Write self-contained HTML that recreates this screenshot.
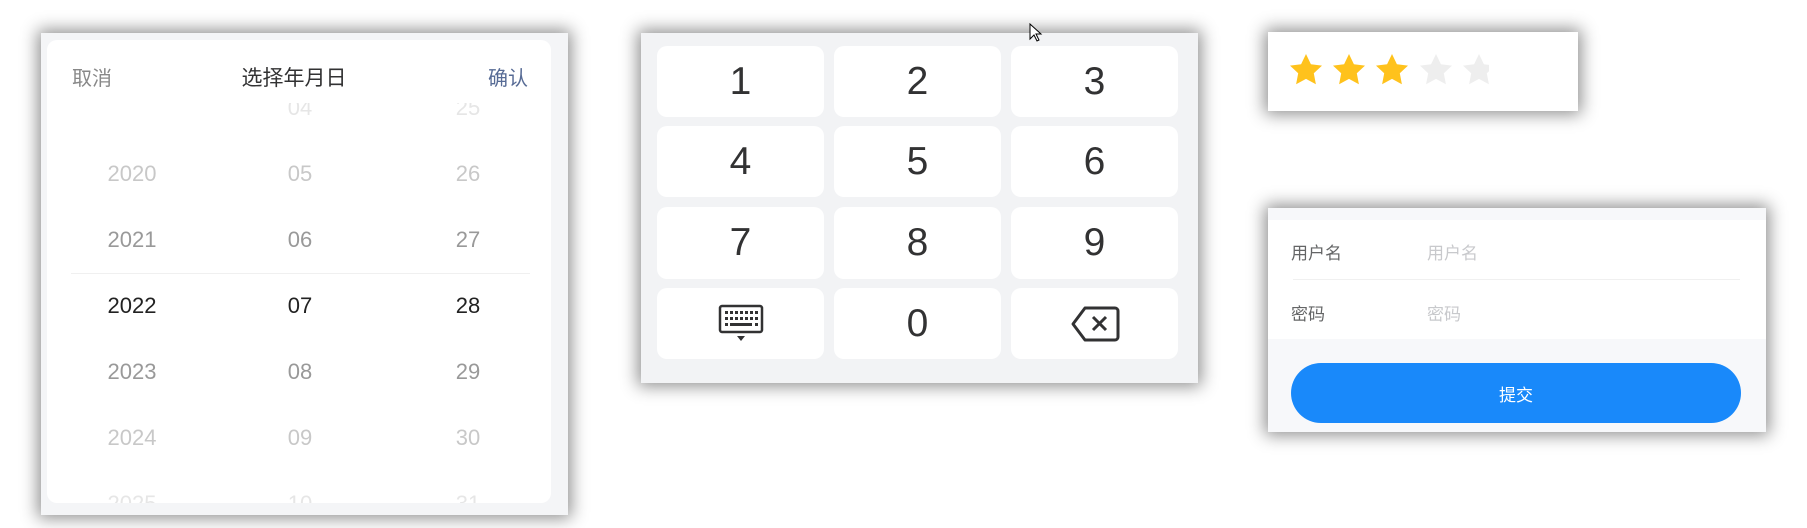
<!DOCTYPE html>
<html><head><meta charset="utf-8"><style>
*{margin:0;padding:0;box-sizing:border-box}
body{width:1807px;height:528px;background:#fff;position:relative;overflow:hidden;font-family:"Liberation Sans","Noto Sans CJK SC",sans-serif}
.card{position:absolute;box-shadow:0 0 16px 3px rgba(0,0,0,.45)}
.a{position:absolute}
.num{position:absolute;transform:translate(-50%,-50%);font-size:22px;white-space:nowrap}
.key{position:absolute;background:#fff;border-radius:10px;display:flex;align-items:center;justify-content:center;font-size:39px;color:#323233;font-family:"Liberation Sans",sans-serif;font-weight:400}
</style></head><body>

<!-- date picker -->
<div class="card" style="left:41px;top:33px;width:527px;height:482px;background:#f4f5f7">
  <div class="a" style="left:6px;top:7px;width:504px;height:463px;background:#fff;border-radius:10px;overflow:hidden">
    <div class="a" style="left:25px;top:22px;font-size:20px;color:#888">取消</div>
    <div class="a" style="left:0;width:504px;top:22px;text-align:center;font-size:21px;color:#323233;padding-right:10px">选择年月日</div>
    <div class="a" style="right:23px;top:22px;font-size:20px;color:#576b95">确认</div>
    <div class="a" style="left:24px;top:233px;width:459px;height:1px;background:#f0f0f0"></div>
  </div>
  <div class="a" style="left:6px;top:70px;width:504px;height:400px;overflow:hidden">
    <div class="num" style="left:253px;top:5px;color:#e6e6e6">04</div>
    <div class="num" style="left:421px;top:5px;color:#e6e6e6">25</div>
    <div class="num" style="left:85px;top:71px;color:#c8c8c8">2020</div>
    <div class="num" style="left:253px;top:71px;color:#c8c8c8">05</div>
    <div class="num" style="left:421px;top:71px;color:#c8c8c8">26</div>
    <div class="num" style="left:85px;top:137px;color:#999">2021</div>
    <div class="num" style="left:253px;top:137px;color:#999">06</div>
    <div class="num" style="left:421px;top:137px;color:#999">27</div>
    <div class="num" style="left:85px;top:203px;color:#222">2022</div>
    <div class="num" style="left:253px;top:203px;color:#222">07</div>
    <div class="num" style="left:421px;top:203px;color:#222">28</div>
    <div class="num" style="left:85px;top:269px;color:#999">2023</div>
    <div class="num" style="left:253px;top:269px;color:#999">08</div>
    <div class="num" style="left:421px;top:269px;color:#999">29</div>
    <div class="num" style="left:85px;top:335px;color:#c8c8c8">2024</div>
    <div class="num" style="left:253px;top:335px;color:#c8c8c8">09</div>
    <div class="num" style="left:421px;top:335px;color:#c8c8c8">30</div>
    <div class="num" style="left:85px;top:401px;color:#e6e6e6">2025</div>
    <div class="num" style="left:253px;top:401px;color:#e6e6e6">10</div>
    <div class="num" style="left:421px;top:401px;color:#e6e6e6">31</div>
  </div>
</div>

<!-- keypad -->
<div class="card" style="left:641px;top:33px;width:557px;height:350px;background:#f2f3f5">
  <div class="key" style="left:16px;top:13px;width:167px;height:71px">1</div>
  <div class="key" style="left:193px;top:13px;width:167px;height:71px">2</div>
  <div class="key" style="left:370px;top:13px;width:167px;height:71px">3</div>
  <div class="key" style="left:16px;top:93px;width:167px;height:71px">4</div>
  <div class="key" style="left:193px;top:93px;width:167px;height:71px">5</div>
  <div class="key" style="left:370px;top:93px;width:167px;height:71px">6</div>
  <div class="key" style="left:16px;top:174px;width:167px;height:72px">7</div>
  <div class="key" style="left:193px;top:174px;width:167px;height:72px">8</div>
  <div class="key" style="left:370px;top:174px;width:167px;height:72px">9</div>
  <div class="key" style="left:16px;top:255px;width:167px;height:71px">
    <svg width="46" height="40" viewBox="0 0 46 40"><rect x="2" y="2" width="42" height="26" rx="2" fill="none" stroke="#323233" stroke-width="2.5"/>
    <g fill="#323233"><rect x="7" y="7" width="3" height="3"/><rect x="12" y="7" width="3" height="3"/><rect x="17" y="7" width="3" height="3"/><rect x="22" y="7" width="3" height="3"/><rect x="27" y="7" width="3" height="3"/><rect x="32" y="7" width="3" height="3"/><rect x="37" y="7" width="3" height="3"/>
    <rect x="7" y="13" width="3" height="3"/><rect x="12" y="13" width="3" height="3"/><rect x="17" y="13" width="3" height="3"/><rect x="22" y="13" width="3" height="3"/><rect x="27" y="13" width="3" height="3"/><rect x="32" y="13" width="3" height="3"/><rect x="37" y="13" width="3" height="3"/>
    <rect x="7" y="19" width="3" height="3"/><rect x="12" y="19" width="22" height="3"/><rect x="37" y="19" width="3" height="3"/>
    <path d="M19 32h8l-4 5z"/></g></svg></div>
  <div class="key" style="left:193px;top:255px;width:167px;height:71px">0</div>
  <div class="key" style="left:370px;top:255px;width:167px;height:71px">
    <svg width="50" height="38" viewBox="0 0 50 38"><path d="M15 3h30a3 3 0 0 1 3 3v26a3 3 0 0 1-3 3H15L3 19z" fill="none" stroke="#323233" stroke-width="3" stroke-linejoin="round"/>
    <path d="M23 12l13 13M36 12L23 25" stroke="#323233" stroke-width="3"/></svg></div>
</div>

<!-- rate -->
<div class="card" style="left:1268px;top:32px;width:310px;height:79px;background:#fff">
  <svg class="a" style="left:21px;top:21px" width="200" height="36" viewBox="0 0 200 36">
    <defs><path id="s" d="M17 1l4.9 10.2 11.1 1.4-8.2 7.7 2.1 11L17 25.9 7.1 31.3l2.1-11L1 12.6l11.1-1.4z"/></defs>
    <use href="#s" fill="#ffc21c"/><use href="#s" x="43" fill="#ffc21c"/><use href="#s" x="86" fill="#ffc21c"/>
    <use href="#s" x="130" fill="#eeeeee"/><use href="#s" x="173" fill="#eeeeee"/>
  </svg>
</div>

<!-- form -->
<div class="card" style="left:1268px;top:208px;width:498px;height:224px;background:#f7f8fa">
  <div class="a" style="left:0;top:12px;width:498px;height:119px;background:#fff"></div>
  <div class="a" style="left:23px;top:31px;font-size:17px;color:#646566">用户名</div>
  <div class="a" style="left:159px;top:31px;font-size:17px;color:#c8c9cc">用户名</div>
  <div class="a" style="left:25px;top:71px;width:447px;height:1px;background:#f0f0f0"></div>
  <div class="a" style="left:23px;top:92px;font-size:17px;color:#646566">密码</div>
  <div class="a" style="left:159px;top:92px;font-size:17px;color:#c8c9cc">密码</div>
  <div class="a" style="left:23px;top:155px;width:450px;height:60px;border-radius:30px;background:#1989fa;color:#fff;font-size:17px;display:flex;align-items:center;justify-content:center">提交</div>
</div>

<!-- cursor -->
<svg class="a" style="left:1029px;top:23px" width="14" height="20" viewBox="0 0 14 20"><path d="M1 1v15l4-4 3 6 2-1-3-6h5z" fill="#fff" stroke="#000" stroke-width="1"/></svg>
</body></html>
